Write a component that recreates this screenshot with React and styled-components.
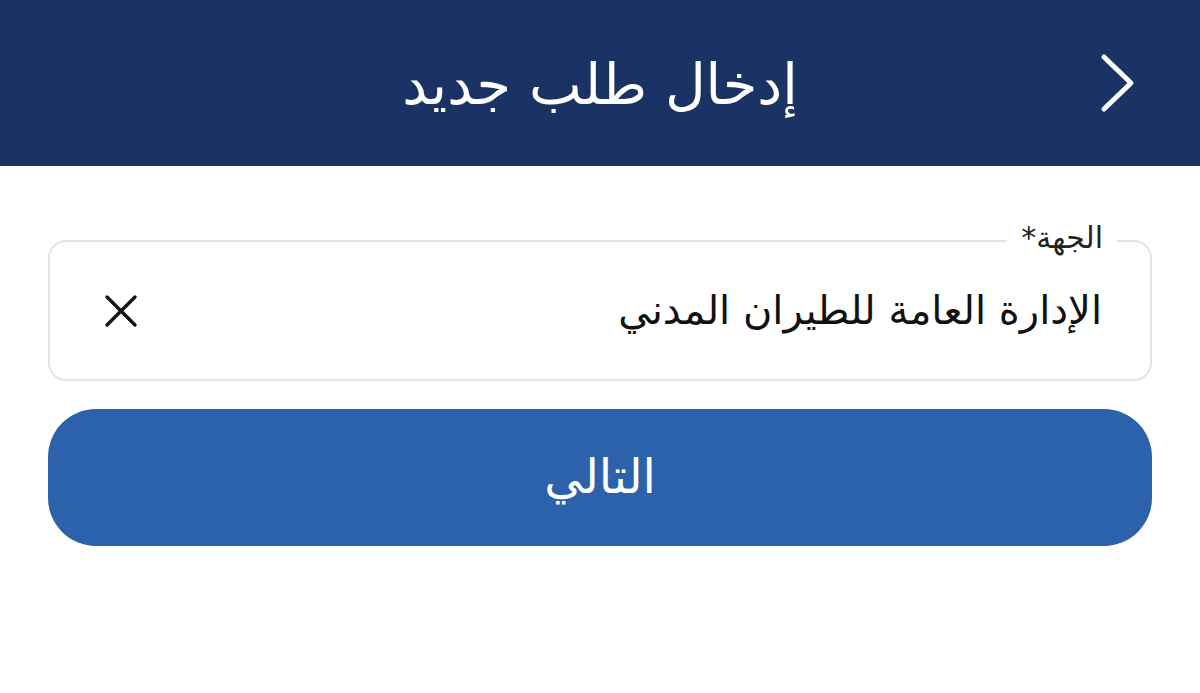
import React from 'react'
import styled, { createGlobalStyle } from 'styled-components'

const GlobalStyle = createGlobalStyle`
    html, body {
        margin: 0;
        padding: 0;
        background: #ffffff;
    }
    body {
        font-family: "DejaVu Sans", "Noto Sans", sans-serif;
    }
`

const Page = styled.div`
    direction: rtl;
    width: 1200px;
    min-height: 693px;
    background: #ffffff;
`

const Header = styled.header`
    height: 166px;
    background: #1b3265;
    display: grid;
    grid-template-columns: 1fr auto 1fr;
    align-items: center;
`

const BackButton = styled.button`
    justify-self: start;
    margin-right: 64px;
    padding: 0;
    border: none;
    background: none;
    display: flex;
    cursor: pointer;
`

const Title = styled.h1`
    margin: 0;
    color: #ffffff;
    font-weight: 400;
    font-size: 56px;
    line-height: 1;
    padding-top: 4px;
`

const Content = styled.main`
    padding: 74px 48px 0;
    display: flex;
    flex-direction: column;
    gap: 28px;
`

const Field = styled.div`
    position: relative;
    height: 141px;
    box-sizing: border-box;
    border: 2px solid #dfe4ed;
    border-radius: 18px;
    display: flex;
    align-items: center;
    justify-content: space-between;
    padding: 0 48px 0 54px;
`

const FieldLabel = styled.label`
    position: absolute;
    top: -24px;
    right: 33px;
    padding: 0 14px;
    background: #ffffff;
    color: #222222;
    font-size: 30px;
    line-height: 40px;
`

const FieldValue = styled.span`
    color: #111111;
    font-size: 40px;
    line-height: 1;
    padding-bottom: 2px;
`

const ClearButton = styled.button`
    border: none;
    background: none;
    padding: 0;
    display: flex;
    cursor: pointer;
`

const NextButton = styled.button`
    height: 137px;
    border: none;
    border-radius: 48px;
    background: #2b62ab;
    color: #ffffff;
    font-family: inherit;
    font-size: 48px;
    font-weight: 400;
    cursor: pointer;
    padding-bottom: 4px;
`

const Chevron = () => (
    <svg width="36" height="60" viewBox="0 0 36 60" fill="none">
        <path d="M4 4 L31 30 L4 56" stroke="#ffffff" strokeWidth="5" strokeLinecap="round" strokeLinejoin="round" />
    </svg>
)

const CloseIcon = () => (
    <svg width="34" height="34" viewBox="0 0 34 34" fill="none">
        <path d="M3 3 L31 31 M31 3 L3 31" stroke="#111111" strokeWidth="3.4" strokeLinecap="round" />
    </svg>
)

const App = () => (
    <>
        <GlobalStyle />
        <Page>
            <Header>
                <BackButton aria-label="رجوع"><Chevron /></BackButton>
                <Title>إدخال طلب جديد</Title>
                <span />
            </Header>
            <Content>
                <Field>
                    <FieldLabel>الجهة*</FieldLabel>
                    <FieldValue>الإدارة العامة للطيران المدني</FieldValue>
                    <ClearButton aria-label="مسح"><CloseIcon /></ClearButton>
                </Field>
                <NextButton>التالي</NextButton>
            </Content>
        </Page>
    </>
)

export default App
